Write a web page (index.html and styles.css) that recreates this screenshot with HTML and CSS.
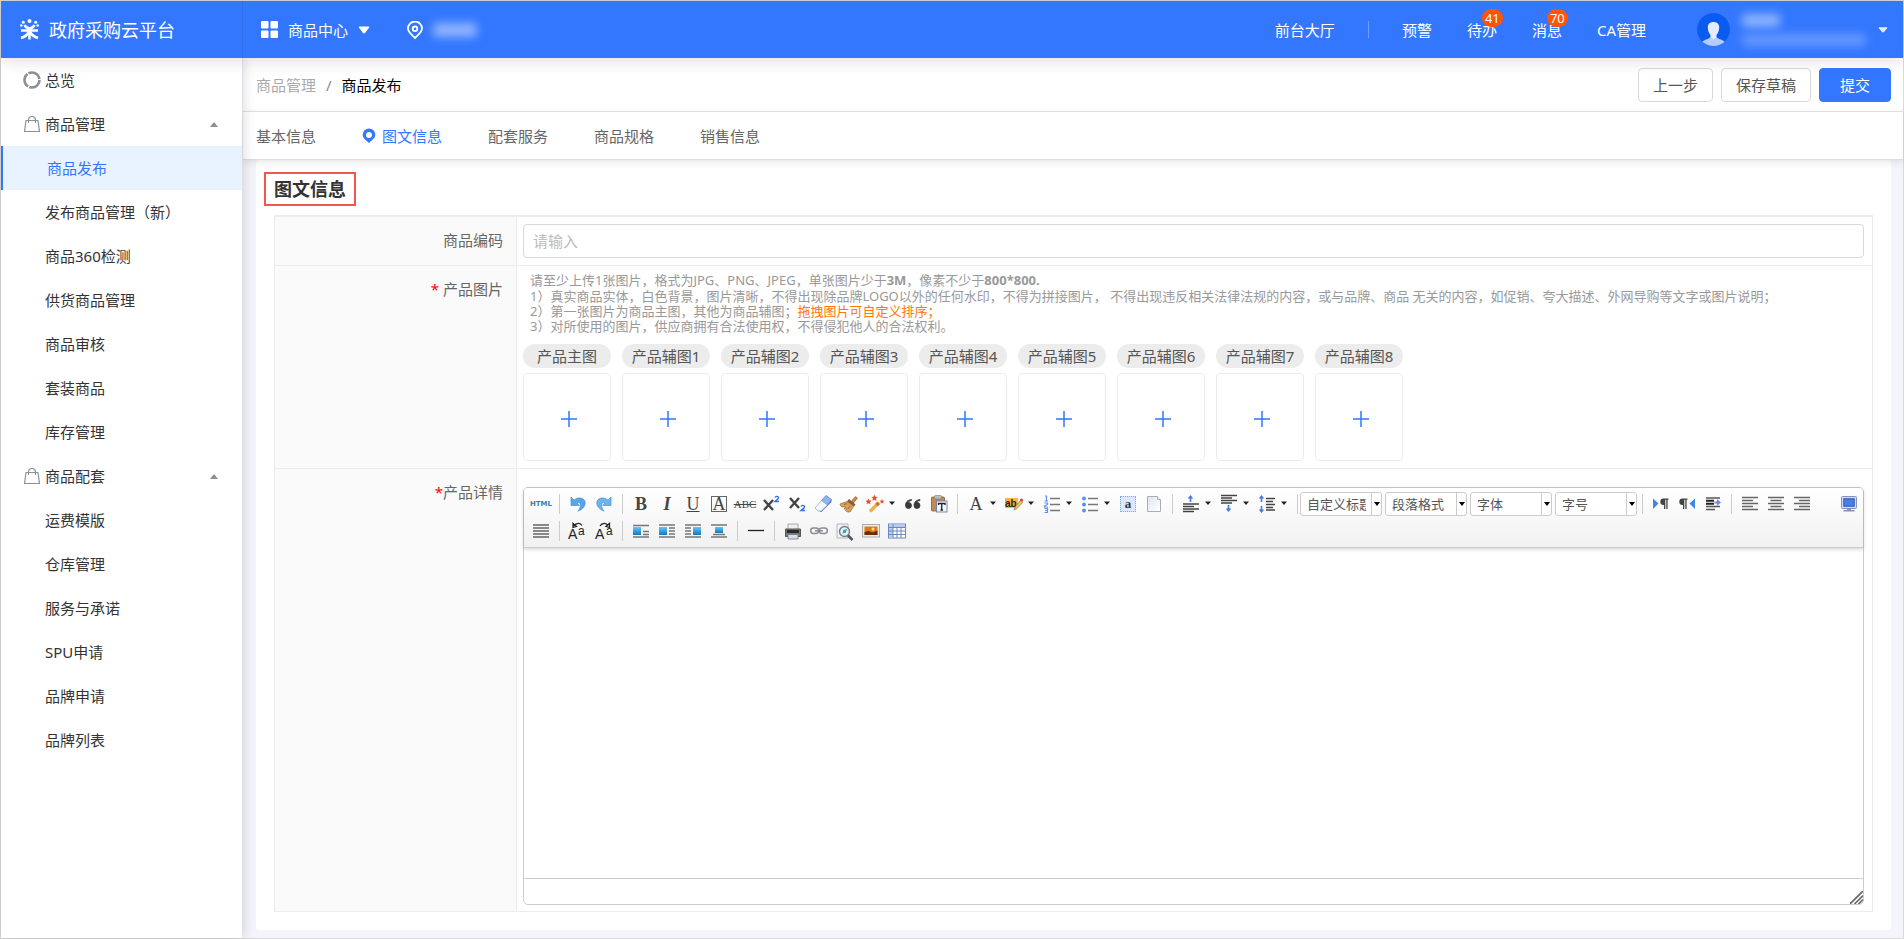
FILE: index.html
```html
<!DOCTYPE html>
<html lang="zh-CN">
<head>
<meta charset="utf-8">
<title>商品发布 - 政府采购云平台</title>
<link rel="stylesheet" href="styles.css">
</head>
<body>
<svg class="defs" aria-hidden="true">
  <defs>
    <linearGradient id="blue" x1="0" y1="0" x2="0" y2="1"><stop offset="0" stop-color="#6fc3f5"/><stop offset="1" stop-color="#0a78c8"/></linearGradient>
    <linearGradient id="page" x1="0" y1="0" x2="1" y2="1"><stop offset="0" stop-color="#dfe6f0"/><stop offset="1" stop-color="#ffffff"/></linearGradient>
    <symbol id="i-caret" viewBox="0 0 8 5"><path d="M1 0.500h6L4 4z" fill="#222"/></symbol>
    <symbol id="i-bag" viewBox="0 0 18 18"><path d="M3 5.500h12l1.500 11h-15zM5.500 8V5a3.500 3.500 0 0 1 7 0v3" fill="none" stroke="#8c9097" stroke-width="1.200" stroke-linejoin="round"/></symbol>
    <symbol id="i-plus" viewBox="0 0 18 18"><path d="M9 1v16M1 9h16" stroke="#3377ff" stroke-width="1.500" fill="none"/></symbol>
  </defs>
</svg>
<div class="frame">
  <header class="topbar">
    <div class="brand">
      <svg width="20" height="21" viewBox="0 0 20 21" aria-hidden="true"><g fill="#fff"><circle cx="9.500" cy="2" r="2"/><circle cx="3.300" cy="3.300" r="1.500"/><circle cx="15.700" cy="3.300" r="1.500"/><circle cx="1.300" cy="6.500" r="1.200"/><circle cx="17.700" cy="6.500" r="1.200"/></g><path d="M4.500 6c1 2.200 2.800 3.200 5 3.200s4-1 5-3.200M1 11.600h17M9.500 8.500v12" fill="none" stroke="#fff" stroke-width="2.500"/><path d="M9 12.500C7.500 16 5 18 1 18.800M10 12.500c1.500 3.500 4 5.500 8 6.300" fill="none" stroke="#fff" stroke-width="2.800"/></svg>
      <span class="brand-name">政府采购云平台</span>
    </div>
    <button class="app-switch" type="button">
      <svg width="17" height="17" viewBox="0 0 17 17" aria-hidden="true"><g fill="#fff"><rect width="7.500" height="7.500" rx="1"/><rect x="9.500" width="7.500" height="7.500" rx="1"/><rect y="9.500" width="7.500" height="7.500" rx="1"/><rect x="9.500" y="9.500" width="7.500" height="7.500" rx="1"/></g></svg>
      <span>商品中心</span>
      <svg width="12" height="8" viewBox="0 0 12 8" aria-hidden="true"><path d="M1 1h10L6.500 7h-1z" fill="#fff" stroke="#fff" stroke-linejoin="round"/></svg>
    </button>
    <div class="region">
      <svg width="16" height="18" viewBox="0 0 16 18" aria-hidden="true"><path d="M8 17C4.500 13.500 1 11 1 7.500a7 7 0 0 1 14 0C15 11 11.500 13.500 8 17z" fill="none" stroke="#fff" stroke-width="1.800"/><circle cx="8" cy="7.800" r="2.300" fill="none" stroke="#fff" stroke-width="1.800"/></svg>
      <span class="masked masked-region"></span>
    </div>
    <nav class="topnav">
      <a href="#">前台大厅</a>
      <span class="divider"></span>
      <a href="#">预警</a>
      <a href="#">待办<span class="badge">41</span></a>
      <a href="#">消息<span class="badge">70</span></a>
      <a href="#">CA管理</a>
    </nav>
    <button class="account" type="button" aria-label="账号">
      <svg width="33" height="33" viewBox="0 0 33 33" aria-hidden="true"><clipPath id="av"><circle cx="16.500" cy="16.500" r="16.500"/></clipPath><g clip-path="url(#av)"><rect width="33" height="33" fill="#0a5cf0"/><path d="M5 29c2-2.500 8-3 9-5.500h5c1 2.500 7 3 9 5.500v5H5z" fill="#b4cdfd"/><path d="M16.500 9c3.800 0 5.700 2.200 5.700 5.500 0 3-1.200 5.800-2.700 7.500v2.500l-3 1.500-3-1.500V22c-1.500-1.700-2.700-4.500-2.700-7.500C10.800 11.200 12.700 9 16.500 9z" fill="#e4edff"/></g></svg>
      <span class="account-text"><span class="masked masked-name"></span><span class="masked masked-org"></span></span>
      <svg width="10" height="6" viewBox="0 0 10 6" aria-hidden="true"><path d="M1 .8h8L5.500 5h-1z" fill="#e4edff" stroke="#e4edff" stroke-linejoin="round"/></svg>
    </button>
  </header>

  <div class="shell">
    <aside class="sidebar">
      <a class="item group" href="#"><svg width="18" height="18" viewBox="0 0 18 18" aria-hidden="true"><circle cx="9" cy="9" r="7.500" fill="none" stroke="#8c9097" stroke-width="2.600" stroke-dasharray="14.500 1.200"/></svg><span>总览</span></a>
      <a class="item group" href="#"><svg width="18" height="18" aria-hidden="true"><use href="#i-bag"/></svg><span>商品管理</span><svg class="fold" width="8" height="5" viewBox="0 0 8 5" aria-hidden="true"><path d="M0 5h8L4.500 .5h-1z" fill="#8c9097"/></svg></a>
      <a class="item active" href="#">商品发布</a>
      <a class="item" href="#">发布商品管理（新）</a>
      <a class="item" href="#">商品360检测</a>
      <a class="item" href="#">供货商品管理</a>
      <a class="item" href="#">商品审核</a>
      <a class="item" href="#">套装商品</a>
      <a class="item" href="#">库存管理</a>
      <a class="item group" href="#"><svg width="18" height="18" aria-hidden="true"><use href="#i-bag"/></svg><span>商品配套</span><svg class="fold" width="8" height="5" viewBox="0 0 8 5" aria-hidden="true"><path d="M0 5h8L4.500 .5h-1z" fill="#8c9097"/></svg></a>
      <a class="item" href="#">运费模版</a>
      <a class="item" href="#">仓库管理</a>
      <a class="item" href="#">服务与承诺</a>
      <a class="item" href="#">SPU申请</a>
      <a class="item" href="#">品牌申请</a>
      <a class="item" href="#">品牌列表</a>
    </aside>

    <main class="main">
      <div class="pagehead">
        <nav class="crumbs"><a href="#">商品管理</a><span class="slash">/</span><span class="current">商品发布</span></nav>
        <div class="actions">
          <button class="btn" type="button">上一步</button>
          <button class="btn" type="button">保存草稿</button>
          <button class="btn primary" type="button">提交</button>
        </div>
      </div>
      <nav class="tabs">
        <a href="#">基本信息</a>
        <a href="#" class="on"><svg width="14" height="15" viewBox="0 0 14 15" aria-hidden="true"><path d="M7 .5a6.300 6.300 0 0 1 6.300 6.300C13.300 10.300 9.500 12.500 7 15 4.500 12.500 .7 10.300 .7 6.800A6.300 6.300 0 0 1 7 .5zm0 3.400a3 3 0 1 0 0 6 3 3 0 0 0 0-6z" fill="#3377ff"/></svg>图文信息</a>
        <a href="#">配套服务</a>
        <a href="#">商品规格</a>
        <a href="#">销售信息</a>
      </nav>

      <section class="panel">
        <h2 class="title">图文信息</h2>
        <div class="form">
          <div class="row">
            <label class="name" for="code">商品编码</label>
            <div class="value"><input class="text" id="code" type="text" placeholder="请输入"></div>
          </div>
          <div class="row">
            <div class="name"><span class="req">*</span> 产品图片</div>
            <div class="value">
              <div class="hints">
                <p class="lead">请至少上传1张图片，格式为JPG、PNG、JPEG，单张图片少于<b>3M</b>，像素不少于<b>800*800.</b></p>
                <p>1）真实商品实体，白色背景，图片清晰，不得出现除品牌LOGO以外的任何水印，不得为拼接图片， 不得出现违反相关法律法规的内容，或与品牌、商品 无关的内容，如促销、夸大描述、外网导购等文字或图片说明；</p>
                <p>2）第一张图片为商品主图，其他为商品辅图；<span class="warn">拖拽图片可自定义排序；</span></p>
                <p>3）对所使用的图片，供应商拥有合法使用权，不得侵犯他人的合法权利。</p>
              </div>
              <div class="uploads">
                <div class="upload"><span class="pill">产品主图</span><button class="slot" type="button" aria-label="上传产品主图"><svg width="18" height="18"><use href="#i-plus"/></svg></button></div>
                <div class="upload"><span class="pill">产品辅图1</span><button class="slot" type="button" aria-label="上传产品辅图1"><svg width="18" height="18"><use href="#i-plus"/></svg></button></div>
                <div class="upload"><span class="pill">产品辅图2</span><button class="slot" type="button" aria-label="上传产品辅图2"><svg width="18" height="18"><use href="#i-plus"/></svg></button></div>
                <div class="upload"><span class="pill">产品辅图3</span><button class="slot" type="button" aria-label="上传产品辅图3"><svg width="18" height="18"><use href="#i-plus"/></svg></button></div>
                <div class="upload"><span class="pill">产品辅图4</span><button class="slot" type="button" aria-label="上传产品辅图4"><svg width="18" height="18"><use href="#i-plus"/></svg></button></div>
                <div class="upload"><span class="pill">产品辅图5</span><button class="slot" type="button" aria-label="上传产品辅图5"><svg width="18" height="18"><use href="#i-plus"/></svg></button></div>
                <div class="upload"><span class="pill">产品辅图6</span><button class="slot" type="button" aria-label="上传产品辅图6"><svg width="18" height="18"><use href="#i-plus"/></svg></button></div>
                <div class="upload"><span class="pill">产品辅图7</span><button class="slot" type="button" aria-label="上传产品辅图7"><svg width="18" height="18"><use href="#i-plus"/></svg></button></div>
                <div class="upload"><span class="pill">产品辅图8</span><button class="slot" type="button" aria-label="上传产品辅图8"><svg width="18" height="18"><use href="#i-plus"/></svg></button></div>
              </div>
            </div>
          </div>
          <div class="row">
            <label class="name" for="detail"><span class="req">*</span>产品详情</label>
            <div class="value value-editor">
              <div class="editor">
                <div class="toolbar">
                  <div class="tools">
                    <button class="tool html" type="button">HTML</button>
                    <i class="sep"></i>
                    <button class="tool" type="button" aria-label="撤销"><svg width="20" height="20" viewBox="0 0 20 20"><path d="M3 3v8.500h8.500L9 9c1.800-1 3.500 0 3.500 2.200 0 2-1 3.800-2.600 6 4.600-1.900 7.300-4.800 7.300-8.300C17.200 3.800 10.500 2.300 6 6z" fill="#5aa5e6" stroke="#3b86c9" stroke-width=".6"/></svg></button>
                    <button class="tool" type="button" aria-label="重做"><svg width="20" height="20" viewBox="0 0 20 20"><path d="M17 3v8.500H8.500L11 9c-1.800-1-3.500 0-3.500 2.200 0 2 1 3.800 2.600 6C5.500 15.300 2.800 12.400 2.800 8.900 2.800 3.800 9.500 2.300 14 6z" fill="#6fb3ec" stroke="#3b86c9" stroke-width=".6"/></svg></button>
                    <i class="sep"></i>
                    <button class="tool serif" type="button" aria-label="加粗"><b>B</b></button>
                    <button class="tool serif" type="button" aria-label="斜体"><b><i>I</i></b></button>
                    <button class="tool serif under" type="button" aria-label="下划线">U</button>
                    <button class="tool serif" type="button" aria-label="字符边框"><span class="boxed">A</span></button>
                    <button class="tool serif abc" type="button" aria-label="删除线">ABC</button>
                    <button class="tool" type="button" aria-label="上标"><svg width="20" height="20" viewBox="0 0 20 20"><path d="M3 6l9 10M12 6L3 16" stroke="#444" stroke-width="2.400"/><path d="M14 3.500c.5-1.500 3.500-1.500 3.500.3 0 1.200-1.500 2-3.500 3.700h4" fill="none" stroke="#3b6fe0" stroke-width="1.400"/></svg></button>
                    <button class="tool" type="button" aria-label="下标"><svg width="20" height="20" viewBox="0 0 20 20"><path d="M3 4l9 10M12 4L3 14" stroke="#444" stroke-width="2.400"/><path d="M14 12.500c.5-1.500 3.500-1.500 3.500.3 0 1.200-1.500 2-3.500 3.700h4" fill="none" stroke="#3b6fe0" stroke-width="1.400"/></svg></button>
                    <button class="tool" type="button" aria-label="清除格式"><svg width="20" height="20" viewBox="0 0 20 20"><path d="M13 1.500l5.500 4L14.500 11 8.500 6.500z" fill="#8fb4f2" stroke="#5c84cc" stroke-width=".8"/><path d="M8.500 6.500l6 4.500L8.500 17H5l-3-3z" fill="#f4f8fd" stroke="#93a9cc" stroke-width=".8"/><path d="M14.500 11l4-5.500v2.500L8.500 18H6l2.500-1z" fill="#4d7bd0"/></svg></button>
                    <button class="tool" type="button" aria-label="格式刷"><svg width="20" height="20" viewBox="0 0 20 20"><path d="M12.500 7l4-4.500 2 1.500-4 5z" fill="#c98842" stroke="#8f5a25" stroke-width=".6"/><path d="M10 5l6.500 5.500-1.500 2-7-5z" fill="#8a5a32"/><path d="M8 7.500l6.500 5L11 18c-1.500.3-3.500-.3-4.500-1.500l1-2-2.500.6L6.500 12.500l-3.500.5c-1-.8-1.500-1.700-2-3z" fill="#d9a15c" stroke="#9a6630" stroke-width=".7"/><path d="M5 10.500l3-.8M9 15l2-3" stroke="#8a5a32" stroke-width=".8"/></svg></button>
                    <button class="tool drop" type="button" aria-label="自动排版"><svg width="20" height="20" viewBox="0 0 20 20"><path d="M13 9.500L6 16.500" stroke="#eeb04a" stroke-width="3.400" stroke-linecap="round"/><path d="M13.500 9l-2 2" stroke="#b87333" stroke-width="3.600"/><g fill="#e8512c"><path d="M9.500 .5l.9 2.300 2.400.2-1.800 1.600.6 2.400-2.100-1.300L7.400 7l.6-2.400L6.200 3l2.400-.2z"/><path d="M3.500 4.500l.9 2 2.200.2-1.600 1.500.4 2.100-1.900-1.100-1.900 1.100.4-2.100L.4 6.700l2.200-.2z"/><path d="M17 5l.7 1.700 1.800.1-1.400 1.200.5 1.800L17 8.800l-1.600 1 .5-1.800-1.400-1.200 1.800-.1z"/></g></svg><svg width="8" height="5"><use href="#i-caret"/></svg></button>
                    <button class="tool" type="button" aria-label="引用"><svg width="20" height="20" viewBox="0 0 20 20"><path d="M8.500 5.500C4.500 6 2.500 8.300 2.500 11.300a3 3 0 1 0 3-2.800C5.600 7.500 6.800 6.800 8.500 6.500zM17 5.500c-4 .5-6 2.800-6 5.800a3 3 0 1 0 3-2.800c.1-1 1.300-1.700 3-2z" fill="#3a3a3a" stroke="#3a3a3a" stroke-width=".8"/></svg></button>
                    <button class="tool" type="button" aria-label="纯文本粘贴"><svg width="20" height="20" viewBox="0 0 20 20"><rect x="2.500" y="3" width="13" height="14" rx="1" fill="#c08a55" stroke="#8a5a2c" stroke-width=".8"/><rect x="5.500" y="1.500" width="7" height="3.500" rx="1" fill="#b9bec6" stroke="#777" stroke-width=".6"/><rect x="7.500" y="7" width="10.500" height="11" fill="#f2f6fc" stroke="#6a7fa8" stroke-width=".9"/><path d="M9.500 11V9.500h6.500V11M12.700 9.500v6.500M11.500 16h2.500" stroke="#222" stroke-width="1.300" fill="none"/></svg></button>
                    <i class="sep"></i>
                    <button class="tool drop serif" type="button" aria-label="字体颜色"><span class="letter">A</span><svg width="8" height="5"><use href="#i-caret"/></svg></button>
                    <button class="tool drop" type="button" aria-label="背景色"><svg width="20" height="20" viewBox="0 0 20 20"><rect x="1" y="4" width="13" height="10" fill="#f6b64c"/><text class="ab" x="1" y="13">ab</text><path d="M17 6l-6 7-1 3 3-1.500 5.500-6z" fill="#e9c46a" stroke="#9a6d2c" stroke-width=".7"/><circle cx="17.500" cy="6" r="1.600" fill="#e0483c"/></svg><svg width="8" height="5"><use href="#i-caret"/></svg></button>
                    <button class="tool drop" type="button" aria-label="有序列表"><svg width="20" height="20" viewBox="0 0 20 20"><path d="M8 4.500h10M8 10.500h10M8 16.500h10" stroke="#777" stroke-width="1.300"/><path d="M3 2h1.500v5M2.500 7h3.500M2.500 9h3v1.500l-3 1.500v1h3.500M2.500 14.500h3v4h-3M3 16.500h2.500" fill="none" stroke="#5b8ff0" stroke-width="1.200"/></svg><svg width="8" height="5"><use href="#i-caret"/></svg></button>
                    <button class="tool drop" type="button" aria-label="无序列表"><svg width="20" height="20" viewBox="0 0 20 20"><path d="M8 4.500h10M8 10.500h10M8 16.500h10" stroke="#777" stroke-width="1.300"/><g fill="#5b8ff0"><circle cx="4" cy="4.500" r="2"/><circle cx="4" cy="10.500" r="2"/><circle cx="4" cy="16.500" r="2"/></g></svg><svg width="8" height="5"><use href="#i-caret"/></svg></button>
                    <button class="tool" type="button" aria-label="全选"><span class="select-all">a</span></button>
                    <button class="tool" type="button" aria-label="清空文档"><svg width="20" height="20" viewBox="0 0 20 20"><path d="M3.500 2.500h10l3 3v12h-13z" fill="url(#page)" stroke="#a9adb5"/><path d="M13.500 2.500v3h3" fill="#fff" stroke="#a9adb5"/></svg></button>
                    <i class="sep"></i>
                    <button class="tool drop" type="button" aria-label="段前距"><svg width="20" height="20" viewBox="0 0 20 20"><path d="M2 10h16M2 12.500h11M2 15h16M2 17.500h11" stroke="#444" stroke-width="1.500"/><path d="M9.500 1l2.800 3.500h-2v3.500H8.700V4.500h-2z" fill="#4a78d8"/></svg><svg width="8" height="5"><use href="#i-caret"/></svg></button>
                    <button class="tool drop" type="button" aria-label="段后距"><svg width="20" height="20" viewBox="0 0 20 20"><path d="M2 1.500h16M2 4h11M2 6.500h16M2 9h11" stroke="#444" stroke-width="1.500"/><path d="M9.500 18l2.800-3.500h-2V11H8.700v3.500h-2z" fill="#4a78d8"/></svg><svg width="8" height="5"><use href="#i-caret"/></svg></button>
                    <button class="tool drop" type="button" aria-label="行间距"><svg width="20" height="20" viewBox="0 0 20 20"><path d="M9 4.500h9M9 7.500h7M9 10.500h9M9 13.500h7M9 16h9" stroke="#444" stroke-width="1.400"/><path d="M4.500 1l2.800 3.500h-2V8H3.700V4.500h-2zM4.500 19l2.800-3.500h-2V12H3.700v3.500h-2z" fill="#4a78d8"/></svg><svg width="8" height="5"><use href="#i-caret"/></svg></button>
                    <i class="sep"></i>
                    <div class="combos">
                      <div class="combo"><select aria-label="自定义标题"><option>自定义标题</option></select></div>
                      <div class="combo"><select aria-label="段落格式"><option>段落格式</option></select></div>
                      <div class="combo"><select aria-label="字体"><option>字体</option></select></div>
                      <div class="combo"><select aria-label="字号"><option>字号</option></select></div>
                    </div>
                    <i class="sep"></i>
                    <button class="tool" type="button" aria-label="从左向右输入"><svg width="20" height="20" viewBox="0 0 20 20"><path d="M2 4.500l5.500 5L2 15z" fill="#3f86f0"/><path d="M17.500 4.500h-5a3.200 3.200 0 0 0 0 6.400h.5V15h1.300V5.800h1V15h1.300V5.800h.9z" fill="#444"/></svg></button>
                    <button class="tool" type="button" aria-label="从右向左输入"><svg width="20" height="20" viewBox="0 0 20 20"><path d="M18 4.500l-5.500 5L18 15z" fill="#3f86f0"/><path d="M10.500 4.500h-5a3.200 3.200 0 0 0 0 6.400H6V15h1.300V5.800h1V15h1.300V5.800h.9z" fill="#444"/></svg></button>
                    <button class="tool" type="button" aria-label="首行缩进"><svg width="20" height="20" viewBox="0 0 20 20"><path d="M3 4h14M3 12.500h14M3 15.500h9" stroke="#555" stroke-width="1.400"/><path d="M3 6.800h8M3 9.700h8" stroke="#222" stroke-width="2"/><path d="M11.500 7.500h2.500V5l4 3.500-4 3.300V9.500h-2.500z" fill="#5b8ff0"/></svg></button>
                    <i class="sep"></i>
                    <button class="tool" type="button" aria-label="居左对齐"><svg width="20" height="20" viewBox="0 0 20 20"><path d="M2 3.500h16M2 6.500h11M2 9.500h16M2 12.500h11M2 15.500h16" stroke="#666" stroke-width="1.400"/></svg></button>
                    <button class="tool" type="button" aria-label="居中对齐"><svg width="20" height="20" viewBox="0 0 20 20"><path d="M2 3.500h16M4.500 6.500h11M2 9.500h16M4.500 12.500h11M2 15.500h16" stroke="#666" stroke-width="1.400"/></svg></button>
                    <button class="tool" type="button" aria-label="居右对齐"><svg width="20" height="20" viewBox="0 0 20 20"><path d="M2 3.500h16M7 6.500h11M2 9.500h16M7 12.500h11M2 15.500h16" stroke="#666" stroke-width="1.400"/></svg></button>
                    <button class="tool last" type="button" aria-label="全屏"><svg width="20" height="20" viewBox="0 0 20 20"><rect x="2.500" y="2.500" width="15" height="12" rx="1" fill="#cfdcf3" stroke="#7f93bd"/><rect x="4.800" y="4.800" width="10.400" height="7.400" fill="#4a7fe6" stroke="#2a55b0"/><path d="M8 14.500h4v1.500h3.500v1.500h-11V16H8z" fill="#8294b5"/></svg></button>
                  </div>
                  <div class="tools">
                    <button class="tool" type="button" aria-label="两端对齐"><svg width="20" height="20" viewBox="0 0 20 20"><path d="M2 4h16M2 7h16M2 10h16M2 13h16M2 16h16" stroke="#666" stroke-width="1.500"/></svg></button>
                    <i class="sep"></i>
                    <button class="tool" type="button" aria-label="字母大写"><svg width="20" height="20" viewBox="0 0 20 20"><text class="case" x="0" y="18">A</text><text class="case small" x="10" y="14">a</text><path d="M6 5c2-3.500 6.500-3.500 8-.5M8.500 5.500L5 6.500V2.500z" fill="none" stroke="#222" stroke-width="1.300"/></svg></button>
                    <button class="tool" type="button" aria-label="字母小写"><svg width="20" height="20" viewBox="0 0 20 20"><text class="case" x="1" y="18">A</text><text class="case small" x="12" y="14">a</text><path d="M6 5c2-3.500 6.500-3.500 8-.5M12 5.500l3.500 1v-4z" fill="none" stroke="#222" stroke-width="1.300"/></svg></button>
                    <i class="sep"></i>
                    <button class="tool" type="button" aria-label="图片默认"><svg width="20" height="20" viewBox="0 0 20 20"><path d="M2 4.500h16M12 10.500h6M12 13.500h6M2 16h16" stroke="#777" stroke-width="1.400"/><rect x="2" y="6" width="8" height="8" fill="url(#blue)"/></svg></button>
                    <button class="tool" type="button" aria-label="图片左浮动"><svg width="20" height="20" viewBox="0 0 20 20"><path d="M2 4h16M12 7h6M12 10h6M12 13h6M2 16h16" stroke="#777" stroke-width="1.400"/><rect x="2" y="6" width="8" height="8" fill="url(#blue)"/></svg></button>
                    <button class="tool" type="button" aria-label="图片右浮动"><svg width="20" height="20" viewBox="0 0 20 20"><path d="M2 4h16M2 7h6M2 10h6M2 13h6M2 16h16" stroke="#777" stroke-width="1.400"/><rect x="10" y="6" width="8" height="8" fill="url(#blue)"/></svg></button>
                    <button class="tool" type="button" aria-label="图片居中"><svg width="20" height="20" viewBox="0 0 20 20"><path d="M2 4h16M4 13.500h12M2 16h16" stroke="#777" stroke-width="1.400"/><rect x="6" y="6" width="8" height="6" fill="url(#blue)"/></svg></button>
                    <i class="sep"></i>
                    <button class="tool" type="button" aria-label="分隔线"><svg width="20" height="20" viewBox="0 0 20 20"><path d="M2 9.500h16" stroke="#222" stroke-width="1.300"/></svg></button>
                    <i class="sep"></i>
                    <button class="tool" type="button" aria-label="打印"><svg width="20" height="20" viewBox="0 0 20 20"><path d="M5 3h10v6H5z" fill="#eee" stroke="#999" stroke-width=".8"/><path d="M2.500 8h15v7.500h-15z" fill="#777" stroke="#555"/><path d="M4 9h12v3H4z" fill="#2a2a2a"/><path d="M5 13.500h10V18H5z" fill="#cfe0f5" stroke="#777" stroke-width=".8"/></svg></button>
                    <button class="tool" type="button" aria-label="超链接"><svg width="20" height="20" viewBox="0 0 20 20"><g fill="none" stroke="#8a8d92" stroke-width="1.500"><rect x="1.700" y="7" width="8" height="5.500" rx="2.700"/><rect x="10.300" y="7" width="8" height="5.500" rx="2.700"/><path d="M6 9.800h8"/></g></svg></button>
                    <button class="tool" type="button" aria-label="预览"><svg width="20" height="20" viewBox="0 0 20 20"><path d="M2 3h11v14H2z" fill="#f2f4f8" stroke="#b0b4bb"/><circle cx="9.500" cy="10.500" r="5" fill="#dff0f5" stroke="#777c85" stroke-width="1.400"/><path d="M7.500 12.500l1-3.500 3.500-1-1.200 3.400z" fill="#2a9fc0"/><path d="M13 14.500l4.500 4.500" stroke="#555" stroke-width="2.600"/></svg></button>
                    <button class="tool" type="button" aria-label="图片"><svg width="20" height="20" viewBox="0 0 20 20"><rect x="1.500" y="3.500" width="17" height="12.500" fill="#ececec" stroke="#aaa"/><rect x="3.500" y="5.500" width="13" height="8.500" fill="#e07818"/><path d="M3.500 14v-3l4-1 4 1.500 5-2V14z" fill="#6e2c08"/><circle cx="12" cy="8" r="1.500" fill="#ffe08a"/></svg></button>
                    <button class="tool" type="button" aria-label="表格"><svg width="20" height="20" viewBox="0 0 20 20"><rect x="1.500" y="3" width="17" height="14" fill="#fff" stroke="#6c88c4"/><path d="M2 3.500h16v3H2zM2 6.500h4v10H2z" fill="#b9caec"/><path d="M6 3v14M10 6.500V17M14 6.500V17M2 6.500h16M2 10h16M2 13.500h16" stroke="#6c88c4"/></svg></button>
                  </div>
                </div>
                <textarea class="canvas" id="detail"></textarea>
                <div class="status"><svg width="13" height="13" viewBox="0 0 13 13" aria-hidden="true"><path d="M0 13L13 0M4.500 13L13 4.500M8.500 13L13 8.500" stroke="#666" stroke-width="1.600"/></svg></div>
              </div>
            </div>
          </div>
        </div>
      </section>
    </main>
  </div>
</div>
</body>
</html>
```
FILE: styles.css
```css
* { box-sizing: border-box; }

body {
  margin: 0;
  color: #333;
  font: 15px/22px "Noto Sans", "Noto Sans CJK SC", sans-serif;
}

a { color: inherit; text-decoration: none; }
button, input, select, textarea { font: inherit; color: inherit; }
button { padding: 0; border: 0; background: none; cursor: pointer; }
svg { display: block; flex: none; }
.defs { position: absolute; width: 0; height: 0; }

.frame {
  display: flex;
  flex-direction: column;
  min-height: 100vh;
  border: 1px solid #d9d9d9;
  background: #f3f5fa;
}

/* top bar */
.topbar {
  display: flex;
  align-items: center;
  height: 57px;
  padding-right: 15px;
  background: #3377ff;
  color: #fff;
  position: relative;
  z-index: 3;
  box-shadow: 0 2px 16px rgba(0, 0, 0, .14);
}
.brand {
  display: flex;
  align-items: center;
  gap: 9px;
  width: 242px;
  height: 100%;
  padding-left: 19px;
  border-right: 1px solid #2f6eea;
}
.brand-name { font-size: 18px; }
.app-switch { display: flex; align-items: center; gap: 10px; margin-left: 18px; }
.region { display: flex; align-items: center; gap: 10px; margin-left: 37px; }
.masked { display: block; border-radius: 4px; background: #8fb4ff; filter: blur(5px); }
.masked-region { width: 44px; height: 14px; }
.topnav { display: flex; align-items: center; gap: 35px; margin-left: auto; }
.topnav a { position: relative; }
.divider { width: 1px; height: 17px; background: #6b9dff; margin: 0 -2px; }
.badge {
  position: absolute;
  top: -10px;
  left: 15px;
  padding: 0 3px;
  border-radius: 9px;
  background: #ff5500;
  font-size: 13px;
  line-height: 18px;
}
.account { display: flex; align-items: center; gap: 12px; margin-left: 51px; }
.account-text { display: grid; gap: 7px; width: 124px; }
.masked-name { width: 38px; height: 13px; }
.masked-org { height: 12px; background: #6598ff; }

/* side menu */
.shell { display: flex; flex: 1; }
.sidebar {
  flex: none;
  width: 241px;
  background: #fff;
  position: relative;
  z-index: 2;
  box-shadow: 1px 0 12px rgba(0, 0, 0, .16);
}
.item { display: flex; align-items: center; height: 44px; padding-left: 44px; }
.group { gap: 4px; padding: 0 24px 0 22px; }
.fold { margin-left: auto; }
.active { border-left: 2px solid #3377ff; background: #e8f3ff; color: #3377ff; }

/* page head */
.main { flex: 1; min-width: 0; padding-left: 1px; }
.pagehead {
  display: flex;
  align-items: center;
  justify-content: space-between;
  height: 54px;
  padding: 0 12px 0 13px;
  border-bottom: 1px solid #e6e6e6;
  background: #fff;
}
.crumbs { display: flex; gap: 10px; color: #aaa; }
.slash { color: #888; }
.current { color: #000; }
.actions { display: flex; gap: 8px; }
.btn {
  height: 34px;
  padding: 0 14px;
  border: 1px solid #d9d9d9;
  border-radius: 4px;
  background: #fff;
  color: #555;
}
.primary { padding: 0 20px; border-color: #3377ff; background: #3377ff; color: #fff; }
.tabs {
  display: flex;
  align-items: center;
  gap: 46px;
  height: 48px;
  padding-left: 13px;
  border-bottom: 1px solid #dcdcdc;
  background: #fff;
  color: #666;
  position: relative;
  z-index: 1;
  box-shadow: 0 2px 8px rgba(0, 0, 0, .1);
}
.tabs a { display: flex; align-items: center; gap: 6px; }
.tabs .on { color: #3377ff; }

/* form panel */
.panel { margin: 0 12px 8px 13px; padding: 12px 18px 18px; border-radius: 3px; background: #fff; }
.title {
  width: max-content;
  margin: 0 0 9px -10px;
  padding: 4px 8px;
  border: 2px solid #f5554a;
  font-size: 18px;
  line-height: 22px;
}
.form { border: 1px solid #ececec; border-top-width: 2px; }
.row { display: flex; border-bottom: 1px solid #ececec; }
.row:last-child { border-bottom: 0; }
.name {
  flex: none;
  width: 242px;
  padding: 12px 13px 0 0;
  border-right: 1px solid #ececec;
  background: #fafafa;
  color: #666;
  text-align: right;
}
.req { color: #f00; }
.value { flex: 1; min-width: 0; padding: 7px 8px 7px 6px; }
.text {
  display: block;
  width: 100%;
  height: 34px;
  padding: 0 9px;
  border: 1px solid #d9d9d9;
  border-radius: 4px;
}
.text::placeholder { color: #bbb; }
.hints { padding-left: 7px; color: #999; font-size: 13px; line-height: 15px; }
.hints p { margin: 0; }
.hints .lead { margin-bottom: 1px; }
.warn { color: #ff7800; }
.uploads { display: flex; flex-wrap: wrap; gap: 11px; margin-top: 10px; }
.upload { display: grid; gap: 5px; width: 88px; }
.pill { border-radius: 12px; background: #ececec; color: #555; line-height: 24px; text-align: center; }
.slot {
  display: grid;
  place-items: center;
  height: 88px;
  padding: 4px 0 0 4px;
  border: 1px solid #ececec;
  border-radius: 4px;
  background: #fff;
}

/* rich text editor */
.value-editor { padding: 18px 8px 6px 6px; }
.editor { border: 1px solid #ccc; border-radius: 5px; background: #fff; }
.toolbar {
  padding: 2px 1px 3px 4px;
  border-bottom: 1px solid #ccc;
  border-radius: 4px 4px 0 0;
  background: linear-gradient(#fff, #f1f1f1);
  box-shadow: 0 1px 4px rgba(0, 0, 0, .2);
  position: relative;
}
.tools { display: flex; align-items: center; height: 27px; }
.tool { display: flex; flex: none; align-items: center; justify-content: center; width: 26px; height: 26px; }
.drop { width: 38px; justify-content: flex-start; gap: 3px; padding-left: 3px; }
.last { margin-left: auto; }
.sep { flex: none; width: 1px; height: 20px; margin: 0 5px; background: #ccc; }
.html { color: #3a7fae; font: bold 7px/20px "DejaVu Sans", sans-serif; }
.serif { color: #444; font: 18px/20px "Liberation Serif", serif; }
.under { text-decoration: underline; }
.abc { font-size: 11px; text-decoration: line-through; }
.boxed { width: 16px; border: 1px solid #666; line-height: 14px; text-align: center; }
.letter { width: 20px; text-align: center; }
.ab { font: bold 10px "Liberation Sans", sans-serif; fill: #222; }
.case { font: 14px "Liberation Sans", sans-serif; fill: #222; }
.small { font-size: 12px; }
.select-all {
  width: 16px;
  border: 1px dotted #7aa7f5;
  background: #dbe8ff;
  font: bold 13px/14px "Liberation Serif", serif;
}
.combos { display: flex; gap: 3px; margin-left: -3px; }
.combo { position: relative; width: 82px; }
.combo::before {
  position: absolute;
  top: 0;
  right: 10px;
  width: 1px;
  height: 100%;
  background: #ccc;
  content: "";
}
.combo::after {
  position: absolute;
  top: 10px;
  right: 2px;
  border: 3px solid transparent;
  border-top: 4px solid #000;
  border-bottom: 0;
  content: "";
}
.combo select {
  display: block;
  width: 100%;
  height: 24px;
  padding: 0 15px 0 6px;
  border: 1px solid #ccc;
  border-radius: 3px;
  background: #fff;
  color: #555;
  font-size: 13px;
  appearance: none;
}
.canvas { display: block; width: 100%; height: 330px; padding: 8px; border: 0; outline: 0; resize: none; }
.status {
  display: flex;
  align-items: flex-end;
  justify-content: flex-end;
  height: 26px;
  border-top: 1px solid #ccc;
}
```
